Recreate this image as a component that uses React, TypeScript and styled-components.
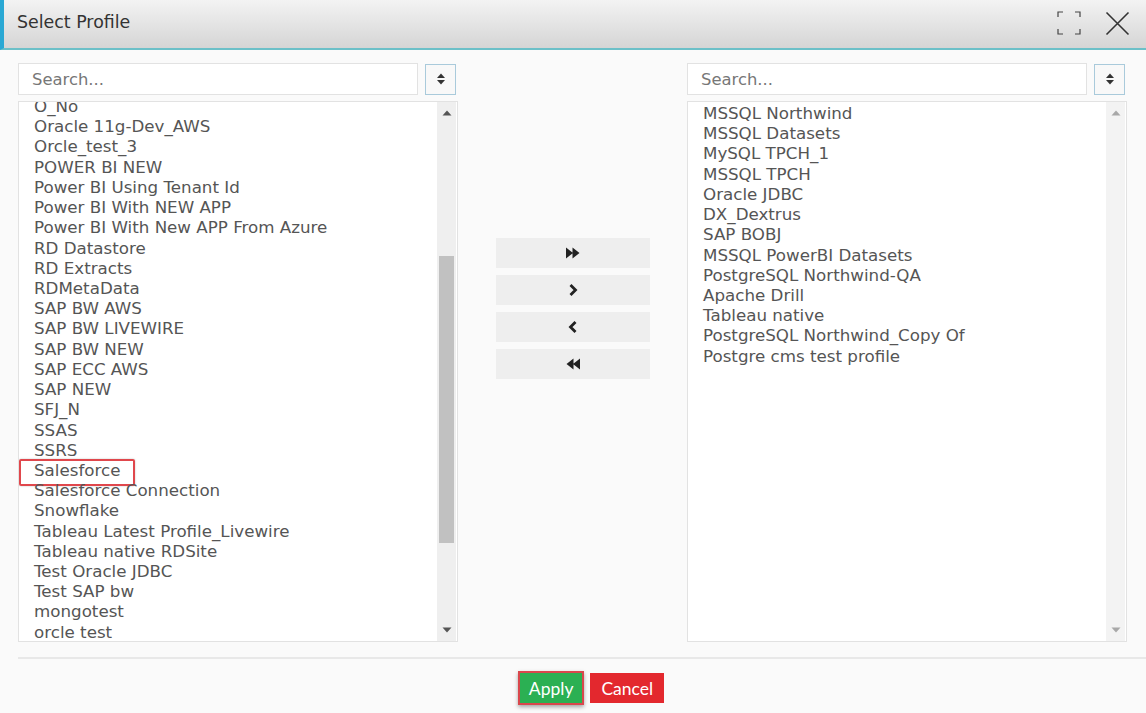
import React from "react";
import styled, { createGlobalStyle } from "styled-components";

const Global = createGlobalStyle`
  html, body { margin: 0; padding: 0; background: #fafafa; }
  body { font-family: "DejaVu Sans", Verdana, sans-serif; }
  * { box-sizing: border-box; }
`;

const Dialog = styled.div`
  width: 1146px;
  height: 713px;
  display: flex;
  flex-direction: column;
  background: #fafafa;
  overflow: hidden;
`;

const Header = styled.div`
  height: 50px;
  flex: none;
  display: flex;
  align-items: center;
  padding: 0 16px 0 13px;
  background: linear-gradient(#f3f3f3, #d5d5d5);
  border-left: 4px solid #2aa8d4;
  border-bottom: 2px solid #6cc0c8;
`;

const Title = styled.div`
  flex: 1;
  font-size: 17.4px;
  color: #333;
  margin-top: -4px;
`;

const HeaderIcons = styled.div`
  display: flex;
  align-items: center;
  gap: 24px;
  margin-top: -2px;
`;

const Body = styled.div`
  display: grid;
  grid-template-columns: 440px 1fr 440px;
  padding: 13px 19px 0 18px;
  height: 607px;
  flex: none;
`;

const Column = styled.div`
  display: flex;
  flex-direction: column;
  gap: 6px;
`;

const SearchRow = styled.div`
  display: flex;
  align-items: center;
  gap: 7px;
  height: 32px;
`;

const SearchInput = styled.div`
  width: 400px;
  height: 32px;
  border: 1px solid #e2e2e2;
  background: #fff;
  display: flex;
  align-items: center;
  padding-left: 13px;
  color: #777;
  font-size: 16.4px;
`;

const SortBtn = styled.div`
  width: 31px;
  height: 31px;
  border: 1px solid #a9cadb;
  background: #f8f8f8;
  display: flex;
  align-items: center;
  justify-content: center;
`;

const ListBox = styled.div`
  height: 541px;
  width: 440px;
  border: 1px solid #e2e2e2;
  background: #fff;
  display: flex;
  overflow: hidden;
`;

const ListViewport = styled.div`
  flex: 1;
  overflow: hidden;
  padding-left: 15px;
`;

const Items = styled.div<{ $offset: number }>`
  margin-top: ${(p) => p.$offset}px;
`;

const Item = styled.div<{ $selected?: boolean }>`
  font-size: 16.7px;
  line-height: 20.23px;
  height: 20.23px;
  color: #555;
  white-space: nowrap;
  position: relative;
  ${(p) =>
    p.$selected &&
    `
    &::after {
      content: "";
      position: absolute;
      left: -15px;
      top: -1px;
      width: 112px;
      height: 23px;
      border: 2px solid #e0474c;
      border-radius: 2px;
      box-shadow: 0 0 2px rgba(0,0,0,0.25);
    }
  `}
`;

const Scrollbar = styled.div<{ $light?: boolean }>`
  width: 19px;
  margin-right: 1px;
  flex: none;
  background: ${(p) => (p.$light ? "#f3f3f3" : "#efefef")};
  display: flex;
  flex-direction: column;
  align-items: center;
`;

const Arrow = styled.div`
  height: 22px;
  flex: none;
  display: flex;
  align-items: center;
  justify-content: center;
`;

const Track = styled.div`
  flex: 1;
  width: 100%;
  display: flex;
  flex-direction: column;
  padding: 0 2px;
`;

const Thumb = styled.div<{ $top: number; $h: number }>`
  margin-top: ${(p) => p.$top}px;
  height: ${(p) => p.$h}px;
  background: #c1c1c1;
`;

const Middle = styled.div`
  display: flex;
  flex-direction: column;
  align-items: center;
  gap: 7px;
  padding-top: 175px;
`;

const MoveBtn = styled.div`
  width: 154px;
  height: 30px;
  background: #eeeeee;
  display: flex;
  align-items: center;
  justify-content: center;
`;

const Divider = styled.div`
  margin: 0 0 0 18px;
  height: 2px;
  background: #e8e8e8;
  flex: none;
`;

const Footer = styled.div`
  display: flex;
  justify-content: center;
  gap: 6px;
  padding-top: 12px;
  padding-left: 36px;
`;

const Btn = styled.div<{ $kind: "apply" | "cancel" }>`
  height: ${(p) => (p.$kind === "apply" ? 34 : 30)}px;
  margin-top: ${(p) => (p.$kind === "apply" ? 0 : 2)}px;
  padding: 0 ${(p) => (p.$kind === "apply" ? 9 : 11)}px;
  display: flex;
  align-items: center;
  font-family: Lato, "Liberation Sans", sans-serif;
  font-size: 17.5px;
  color: #fff;
  background: ${(p) => (p.$kind === "apply" ? "#2bb053" : "#e3282e")};
  ${(p) =>
    p.$kind === "apply" &&
    `border: 2px solid #d9474c; box-shadow: 0 2px 4px rgba(0,0,0,0.35);`}
`;

const leftItems = [
  "O_No",
  "Oracle 11g-Dev_AWS",
  "Orcle_test_3",
  "POWER BI NEW",
  "Power BI Using Tenant Id",
  "Power BI With NEW APP",
  "Power BI With New APP From Azure",
  "RD Datastore",
  "RD Extracts",
  "RDMetaData",
  "SAP BW AWS",
  "SAP BW LIVEWIRE",
  "SAP BW NEW",
  "SAP ECC AWS",
  "SAP NEW",
  "SFJ_N",
  "SSAS",
  "SSRS",
  "Salesforce",
  "Salesforce Connection",
  "Snowflake",
  "Tableau Latest Profile_Livewire",
  "Tableau native RDSite",
  "Test Oracle JDBC",
  "Test SAP bw",
  "mongotest",
  "orcle test",
];

const rightItems = [
  "MSSQL Northwind",
  "MSSQL Datasets",
  "MySQL TPCH_1",
  "MSSQL TPCH",
  "Oracle JDBC",
  "DX_Dextrus",
  "SAP BOBJ",
  "MSSQL PowerBI Datasets",
  "PostgreSQL Northwind-QA",
  "Apache Drill",
  "Tableau native",
  "PostgreSQL Northwind_Copy Of",
  "Postgre cms test profile",
];

const SortIcon = () => (
  <svg width="10" height="14" viewBox="0 0 10 14">
    <path d="M1 6 L5 1.5 L9 6 Z" fill="#333" />
    <path d="M1 8 L5 12.5 L9 8 Z" fill="#333" />
  </svg>
);

const Tri = ({ up, color }: { up?: boolean; color: string }) => (
  <svg width="10" height="6" viewBox="0 0 10 6">
    <path d={up ? "M0.5 5.5 L5 0.5 L9.5 5.5 Z" : "M0.5 0.5 L5 5.5 L9.5 0.5 Z"} fill={color} />
  </svg>
);

const SearchBox = () => (
  <SearchRow>
    <SearchInput>Search...</SearchInput>
    <SortBtn>
      <SortIcon />
    </SortBtn>
  </SearchRow>
);

export default function App() {
  return (
    <Dialog>
      <Global />
      <Header>
        <Title>Select Profile</Title>
        <HeaderIcons>
          <svg width="24" height="24" viewBox="0 0 24 24" fill="none" stroke="#444" strokeWidth="1.2">
            <path d="M1 6 V1 H6 M18 1 H23 V6 M23 18 V23 H18 M6 23 H1 V18" />
          </svg>
          <svg width="25" height="25" viewBox="0 0 25 25" fill="none" stroke="#333" strokeWidth="1.6">
            <path d="M1.5 1.5 L23.5 23.5 M23.5 1.5 L1.5 23.5" />
          </svg>
        </HeaderIcons>
      </Header>
      <Body>
        <Column>
          <SearchBox />
          <ListBox>
            <ListViewport>
              <Items $offset={-6}>
                {leftItems.map((t) => (
                  <Item key={t} $selected={t === "Salesforce"}>
                    {t}
                  </Item>
                ))}
              </Items>
            </ListViewport>
            <Scrollbar>
              <Arrow>
                <Tri up color="#555" />
              </Arrow>
              <Track>
                <Thumb $top={132} $h={287} />
              </Track>
              <Arrow>
                <Tri color="#555" />
              </Arrow>
            </Scrollbar>
          </ListBox>
        </Column>
        <Middle>
          <MoveBtn>
            <svg width="16" height="12" viewBox="0 0 16 12">
              <path d="M1 0.5 L8 6 L1 11.5 Z M7.5 0.5 L14.5 6 L7.5 11.5 Z" fill="#222" />
            </svg>
          </MoveBtn>
          <MoveBtn>
            <svg width="10" height="14" viewBox="0 0 10 14">
              <path d="M2.5 2 L7.5 7 L2.5 12" fill="none" stroke="#222" strokeWidth="2.8" />
            </svg>
          </MoveBtn>
          <MoveBtn>
            <svg width="10" height="14" viewBox="0 0 10 14">
              <path d="M7.5 2 L2.5 7 L7.5 12" fill="none" stroke="#222" strokeWidth="2.8" />
            </svg>
          </MoveBtn>
          <MoveBtn>
            <svg width="16" height="12" viewBox="0 0 16 12">
              <path d="M15 0.5 L8 6 L15 11.5 Z M8.5 0.5 L1.5 6 L8.5 11.5 Z" fill="#222" />
            </svg>
          </MoveBtn>
        </Middle>
        <Column>
          <SearchBox />
          <ListBox>
            <ListViewport>
              <Items $offset={1}>
                {rightItems.map((t) => (
                  <Item key={t}>{t}</Item>
                ))}
              </Items>
            </ListViewport>
            <Scrollbar $light>
              <Arrow>
                <Tri up color="#a8a8a8" />
              </Arrow>
              <Track />
              <Arrow>
                <Tri color="#a8a8a8" />
              </Arrow>
            </Scrollbar>
          </ListBox>
        </Column>
      </Body>
      <Divider />
      <Footer>
        <Btn $kind="apply">Apply</Btn>
        <Btn $kind="cancel">Cancel</Btn>
      </Footer>
    </Dialog>
  );
}
